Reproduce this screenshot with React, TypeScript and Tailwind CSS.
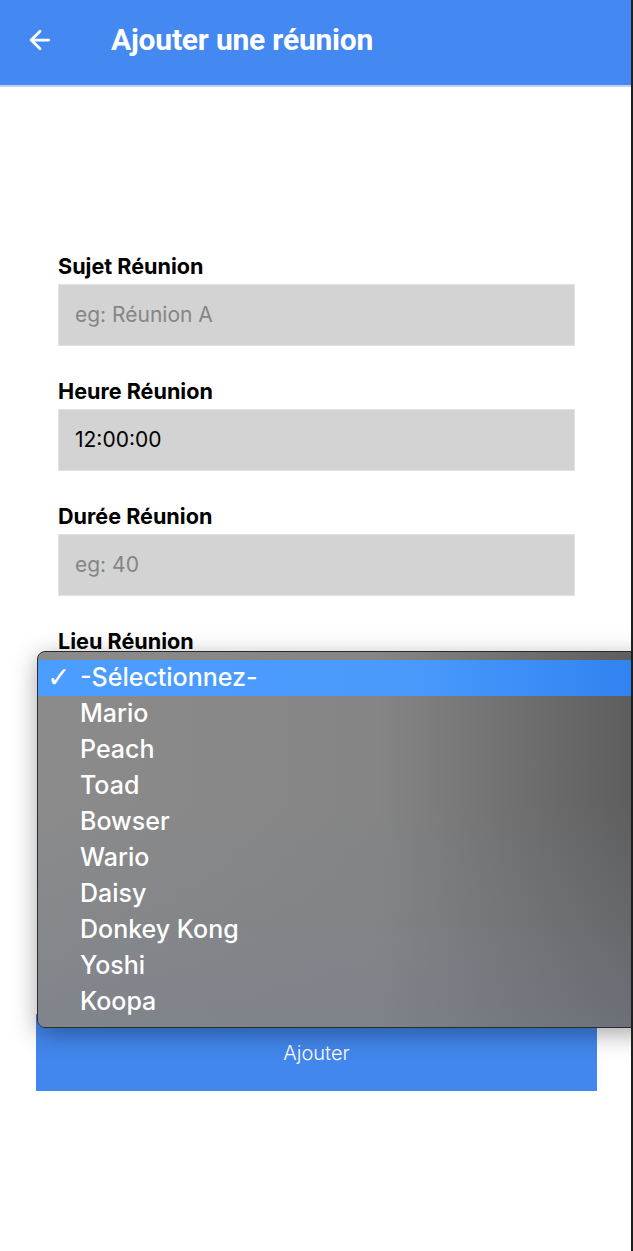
import { ArrowLeft } from "lucide-react";

const LIEUX = ["Mario", "Peach", "Toad", "Bowser", "Wario", "Daisy", "Donkey Kong", "Yoshi", "Koopa"];

function Champ({ label, placeholder, value }: { label: string; placeholder?: string; value?: string }) {
  return (
    <div className="flex flex-col">
      <label className="text-[21.6px] font-bold leading-[24px] text-black">{label}</label>
      <div className="mt-[6px] flex h-[62px] items-center border border-[#e2e2e2] bg-[#d3d3d3] px-[16px] text-[21px]">
        {value ? <span className="text-black">{value}</span> : <span className="text-[#858585]">{placeholder}</span>}
      </div>
    </div>
  );
}

export default function App() {
  return (
    <div className="relative min-h-[1251px] w-full overflow-hidden border-r-2 border-[#1e1e1e] bg-white font-['Inter',sans-serif]">
      {/* Barre du haut */}
      <header className="flex h-[87px] items-center border-b-2 border-[#bcd3f6] bg-[#4489f1] pb-[6px] text-white">
        <ArrowLeft className="ml-[25px] h-[30px] w-[30px]" strokeWidth={2.2} />
        <h1 className="ml-[56px] font-['Roboto',sans-serif] text-[30px] font-bold tracking-[-0.2px]">Ajouter une réunion</h1>
      </header>

      {/* Formulaire */}
      <main className="flex flex-col pl-[58px] pr-[56px] pt-[167px]">
        <div className="flex flex-col gap-[33px]">
          <Champ label="Sujet Réunion" placeholder="eg: Réunion A" />
          <Champ label="Heure Réunion" value="12:00:00" />
          <Champ label="Durée Réunion" placeholder="eg: 40" />
          <div className="flex flex-col">
            <label className="text-[21.6px] font-bold leading-[24px] text-black">Lieu Réunion</label>
            <div className="mt-[6px] h-[62px] bg-[#d3d3d3]" />
          </div>
        </div>
        <button className="-ml-[22px] -mr-[22px] mt-[293px] h-[77px] bg-[#4287ed] text-[20px] font-light text-white">
          Ajouter
        </button>
      </main>

      {/* Liste déroulante ouverte */}
      <div className="absolute left-[37px] top-[651px] h-[377px] w-[620px] overflow-hidden rounded-[8px] border border-[#2c2c2c] bg-[linear-gradient(to_right,#8b8b8b_0%,#858585_55%,#5a5a5a_100%)] py-[8px] shadow-[0_6px_24px_rgba(0,0,0,0.35)]">
        <div className="pointer-events-none absolute inset-0 bg-[linear-gradient(to_bottom,rgba(120,128,140,0)_40%,rgba(120,128,140,0.55)_100%)]" />
        <ul className="relative flex flex-col text-[25px] font-medium text-white">
          <li className="flex h-[36px] items-center bg-[linear-gradient(to_right,#4b9dff,#4a9afc_60%,#2d80f0)]">
            <span className="w-[42px] pl-[9px] font-['DejaVu_Sans',sans-serif] text-[28px] font-normal">✓</span>
            <span>-Sélectionnez-</span>
          </li>
          {LIEUX.map((l) => (
            <li key={l} className="flex h-[36px] items-center pl-[42px]">
              {l}
            </li>
          ))}
        </ul>
      </div>
    </div>
  );
}
